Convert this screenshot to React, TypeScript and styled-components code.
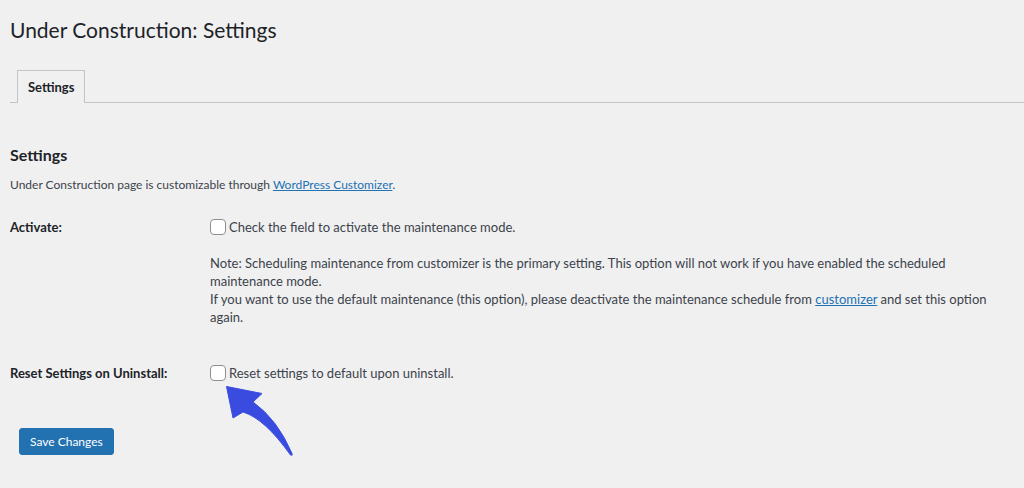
import * as React from "react"
import styled, { createGlobalStyle } from "styled-components"

const GlobalStyle = createGlobalStyle`
    html, body {
        margin: 0;
        padding: 0;
        background: #f0f0f1;
    }
    body {
        font-family: Lato, "Noto Sans", sans-serif;
        font-size: 13px;
        color: #3c434a;
    }
`

const Wrap = styled.div`
    position: relative;
    padding: 15px 0 0 10px;
    width: 1014px;
    height: 473px;
    overflow: hidden;
`

const Title = styled.h1`
    margin: 0;
    font-size: 21px;
    line-height: 29px;
    font-weight: 400;
    color: #1d2327;
`

const NavTabs = styled.nav`
    display: flex;
    height: 32px;
    margin-top: 26px;
    padding-left: 7px;
    border-bottom: 1px solid #c3c4c7;
`

const Tab = styled.a<{ $active?: boolean }>`
    display: block;
    height: 22px;
    padding: 5px 10px;
    border: 1px solid #c3c4c7;
    border-bottom: none;
    background: ${(p) => (p.$active ? "#f0f0f1" : "#dcdcde")};
    font-size: 13px;
    line-height: 22px;
    font-weight: 700;
    color: #1d2327;
    text-decoration: none;
`

const SectionTitle = styled.h2`
    margin: 41px 0 0;
    font-size: 16px;
    line-height: 22px;
    font-weight: 700;
    color: #1d2327;
`

const Text = styled.p`
    margin: 0;
    line-height: 18px;
`

const Intro = styled(Text)`
    margin-top: 10px;
    font-size: 12px;
`

const Link = styled.a`
    color: #2271b1;
    text-decoration: underline;
`

const FormRow = styled.div<{ $top: number }>`
    display: grid;
    grid-template-columns: 200px 1fr;
    margin-top: ${(p) => p.$top}px;
`

const Label = styled.div`
    font-weight: 700;
    color: #1d2327;
    line-height: 18px;
`

const Field = styled.div`
    position: relative;
`

const CheckLabel = styled.label`
    display: flex;
    align-items: center;
    gap: 3px;
    line-height: 18px;
`

const Checkbox = styled.input.attrs({ type: "checkbox" })`
    appearance: none;
    box-sizing: border-box;
    width: 16px;
    height: 16px;
    margin: 0;
    border: 1px solid #8c8f94;
    border-radius: 4px;
    background: #fff;
`

const Note = styled(Text)`
    margin-top: 18px;
    white-space: nowrap;
`

const Arrow = styled.svg`
    position: absolute;
    left: 10px;
    top: 17px;
    width: 80px;
    height: 80px;
`

const SubmitRow = styled.div`
    margin-top: 46px;
    padding-left: 9px;
`

const PrimaryButton = styled.button`
    height: 27px;
    padding: 0 10px;
    border: 1px solid #2271b1;
    border-radius: 3px;
    background: #2271b1;
    color: #fff;
    font-family: inherit;
    font-size: 12px;
    line-height: 25px;
`

export default function App() {
    return (
        <Wrap>
            <GlobalStyle />
            <Title>Under Construction: Settings</Title>
            <NavTabs>
                <Tab $active>Settings</Tab>
            </NavTabs>
            <SectionTitle>Settings</SectionTitle>
            <Intro>
                Under Construction page is customizable through <Link>WordPress Customizer</Link>.
            </Intro>
            <FormRow $top={24}>
                <Label>Activate:</Label>
                <Field>
                    <CheckLabel>
                        <Checkbox />
                        Check the field to activate the maintenance mode.
                    </CheckLabel>
                    <Note>
                        Note: Scheduling maintenance from customizer is the primary setting. This option will not work if you have enabled the scheduled
                        <br />
                        maintenance mode.
                        <br />
                        If you want to use the default maintenance (this option), please deactivate the maintenance schedule from <Link>customizer</Link> and set this option
                        <br />
                        again.
                    </Note>
                </Field>
            </FormRow>
            <FormRow $top={38}>
                <Label>Reset Settings on Uninstall:</Label>
                <Field>
                    <CheckLabel>
                        <Checkbox />
                        Reset settings to default upon uninstall.
                    </CheckLabel>
                    <Arrow viewBox="0 0 80 80">
                        <path
                            d="M6.5 5.5 L42 12.5 L33 21 Q57.5 38.5 72 72.5 Q73 75 70.5 74 Q44.5 37.5 23 31 L13 37 Z"
                            fill="#3a4cdf"
                            stroke="#3a4cdf"
                            strokeWidth="1"
                            strokeLinejoin="round"
                        />
                    </Arrow>
                </Field>
            </FormRow>
            <SubmitRow>
                <PrimaryButton>Save Changes</PrimaryButton>
            </SubmitRow>
        </Wrap>
    )
}
